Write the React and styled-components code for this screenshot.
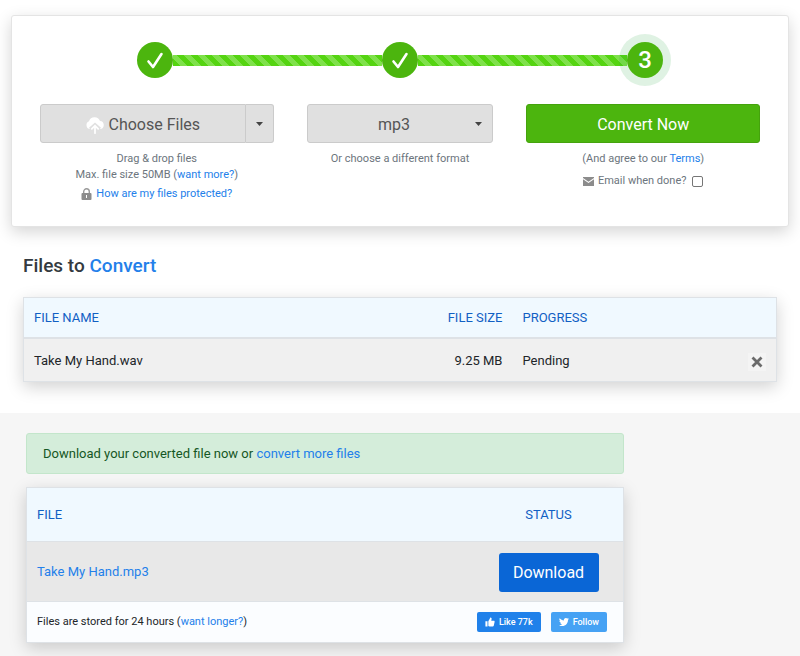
import React, { useState } from 'react';
import styled, { createGlobalStyle } from 'styled-components';

const GlobalStyle = createGlobalStyle`
  * {
    box-sizing: border-box;
  }
  body {
    margin: 0;
    background-color: #f6f6f6;
    color: #212529;
    font-family: Roboto, 'Liberation Sans', sans-serif;
    font-size: 13px;
    line-height: 20px;
  }
  button,
  select,
  input {
    font-family: inherit;
  }
`;

const Link = styled.a`
  color: #2380ea;
  text-decoration: none;
  &:hover {
    text-decoration: underline;
  }
`;

const Top = styled.main`
  background-color: white;
  padding: 15px 11px 31px;
`;

const Card = styled.section`
  border: 1px solid #e4e4e4;
  border-radius: 3px;
  background-color: white;
  box-shadow: 0 5px 16px rgba(0, 0, 0, 0.17);
  padding: 26px 28px 24px;
`;

const Steps = styled.div`
  display: flex;
  align-items: center;
  padding: 0 97px;
`;

const Step = styled.div`
  display: flex;
  align-items: center;
  justify-content: center;
  width: 36px;
  height: 36px;
  border-radius: 50%;
  background-color: #4cb50e;
  color: white;
  font-size: 24px;
  font-weight: 500;
  box-shadow: ${(props) => (props.$active ? '0 0 0 8px rgba(40, 167, 69, 0.15)' : 'none')};
`;

const Connector = styled.div`
  flex: 1;
  height: 11px;
  background: repeating-linear-gradient(45deg, #55d411 0 5px, #7fe14b 5px 10px);
`;

const Columns = styled.div`
  display: grid;
  grid-template-columns: 5fr 4fr 5fr;
  column-gap: 33px;
  margin-top: 26px;
`;

const Column = styled.div`
  display: flex;
  flex-direction: column;
  align-items: center;
  color: #6c757d;
  font-size: 11px;
  line-height: 16px;
`;

const Control = styled.div`
  display: grid;
  grid-template-columns: ${(props) => props.$columns || '1fr'};
  width: 100%;
  height: 39px;
  margin-bottom: 8px;
`;

const BigButton = styled.button`
  display: flex;
  align-items: center;
  justify-content: center;
  gap: 5px;
  padding: 2px 0 0;
  border: 1px solid ${(props) => (props.$green ? '#45a30d' : '#cbcbcb')};
  border-radius: ${(props) => props.$radius || '3px'};
  background-color: ${(props) => (props.$green ? '#4cb50e' : '#e0e0e0')};
  color: ${(props) => (props.$green ? 'white' : '#555')};
  font-size: 16px;
  cursor: pointer;
`;

const CaretButton = styled(BigButton)`
  padding: 0;
  border-left: 0;
`;

const FormatSelect = styled.select`
  grid-area: 1 / 1;
  appearance: none;
  padding: 2px 20px 0 8px;
  border: 1px solid #cbcbcb;
  border-radius: 3px;
  background-color: #e0e0e0;
  color: #555;
  font-size: 16px;
  text-align: center;
  text-align-last: center;
`;

const SelectCaret = styled.span`
  grid-area: 1 / 1;
  display: flex;
  align-items: center;
  justify-self: end;
  padding-right: 11px;
  pointer-events: none;
`;

const Line = styled.div`
  display: flex;
  align-items: center;
  gap: 4px;
  margin-top: ${(props) => props.$top || 0};
`;

const Checkbox = styled.input`
  appearance: none;
  width: 11px;
  height: 11px;
  margin: 0 0 0 2px;
  border: 1px solid #767676;
  border-radius: 2px;
  background-color: white;
  &:checked {
    background-color: #2380ea;
  }
`;

const Title = styled.h1`
  margin: 25px 12px 17px;
  color: #343a40;
  font-size: 19px;
  font-weight: 500;
  line-height: 28px;
`;

const Blue = styled.span`
  color: #2380ea;
`;

const TableShell = styled.div`
  margin: ${(props) => props.$margin || 0};
  border: 1px solid #dee2e6;
  background-color: #fbfdff;
  box-shadow: 0 5px 16px rgba(0, 0, 0, 0.18);
`;

const Table = styled.table`
  width: 100%;
  border-collapse: collapse;
  table-layout: fixed;
`;

const Head = styled.th`
  width: ${(props) => props.$width || 'auto'};
  height: ${(props) => props.$height};
  padding: 1px 10px 0;
  border-bottom: ${(props) => props.$line || '1px'} solid #dee2e6;
  background-color: #f0f9ff;
  color: #1160c4;
  font-weight: 400;
  text-align: ${(props) => props.$align || 'left'};
`;

const Cell = styled.td`
  height: ${(props) => props.$height};
  padding: 2px 10px 0;
  background-color: ${(props) => props.$bg || '#f0f0f0'};
  text-align: ${(props) => props.$align || 'left'};
`;

const RemoveButton = styled.button`
  display: inline-flex;
  padding: 3px;
  border: 0;
  background-color: #f4f4f4;
  vertical-align: middle;
  cursor: pointer;
`;

const Results = styled.section`
  padding: 20px 22% 13px 26px;
`;

const Alert = styled.div`
  padding: 10px 16px;
  border: 1px solid #c3e6cb;
  border-radius: 3px;
  background-color: #d4edda;
  color: #155724;
  line-height: 19px;
`;

const DownloadButton = styled.button`
  width: 100px;
  height: 39px;
  padding: 0;
  border: 0;
  border-radius: 3px;
  background-color: #0a66d6;
  color: white;
  font-size: 16px;
  vertical-align: middle;
  cursor: pointer;
`;

const Footer = styled.footer`
  display: flex;
  align-items: center;
  justify-content: space-between;
  height: 41px;
  padding: 0 16px 0 10px;
  border-top: 1px solid #dee2e6;
  font-size: 11px;
`;

const Social = styled.div`
  display: flex;
  gap: 10px;
`;

const SocialButton = styled.button`
  display: flex;
  align-items: center;
  justify-content: center;
  gap: 4px;
  height: 20px;
  padding: 0 8px;
  border: 0;
  border-radius: 2px;
  background-color: ${(props) => props.$bg};
  color: white;
  font-size: 9px;
  font-weight: 500;
  cursor: pointer;
`;

const Check = () => (
  <svg width="18" height="18" viewBox="0 0 18 18" fill="none" stroke="white" strokeWidth="2.6" strokeLinecap="round" strokeLinejoin="round">
    <path d="M2.500 10.500 7 16 15.500 3" />
  </svg>
);

const Caret = () => (
  <svg width="7" height="4" viewBox="0 0 7 4" fill="#444">
    <path d="M0 0h7L3.5 4z" />
  </svg>
);

const Cloud = () => (
  <svg width="18" height="18" viewBox="0 0 18 18">
    <path fill="white" d="M4.2 13A4 4 0 0 1 3 5.300 5.800 5.800 0 0 1 14 5.100a4 4 0 0 1 .6 7.900z" />
    <path fill="none" stroke="#e0e0e0" strokeWidth="4.500" d="M9 18V10M4.500 13.500 9 9.500l4.500 4" />
    <path fill="none" stroke="white" strokeWidth="1.700" strokeLinecap="round" d="M9 17.200V10M5.800 12.800 9 9.600l3.200 3.200" />
  </svg>
);

const Lock = () => (
  <svg width="11" height="12" viewBox="0 0 11 12">
    <path fill="none" stroke="#999" strokeWidth="1.400" d="M2.700 6V3.600a2.800 2.800 0 0 1 5.600 0V6" />
    <rect x="0.500" y="5" width="10" height="7" rx="1" fill="#8c8c8c" />
    <path fill="none" stroke="white" d="M5.500 7v3" />
  </svg>
);

const Envelope = () => (
  <svg width="11" height="9" viewBox="0 0 11 9" fill="#8c8c8c">
    <path d="M0 0h11v1L5.500 4.800 0 1zM0 2.300l5.500 3.800L11 2.300V9H0z" />
  </svg>
);

const Cross = () => (
  <svg width="12" height="12" viewBox="0 0 12 12" stroke="#6b6b6b" strokeWidth="2.800">
    <path d="M1.500 1.500l9 9M10.500 1.500l-9 9" />
  </svg>
);

const Thumb = () => (
  <svg width="10" height="10" viewBox="0 0 24 24" fill="white">
    <path d="M1 10h5v13H1zM8 10l5-9c2 0 3 1.500 3 3l-1 5h6c1.500 0 2.500 1.200 2 3l-2 9c-.4 1.300-1.200 2-2.500 2H11l-3-1.500z" />
  </svg>
);

const Bird = () => (
  <svg width="10" height="10" viewBox="0 0 24 24" fill="white">
    <path d="M23.950 4.570a10 10 0 0 1-2.820.770 4.960 4.960 0 0 0 2.160-2.720c-.95.550-2 .950-3.130 1.180a4.920 4.920 0 0 0-8.380 4.480C7.690 8.090 4.070 6.130 1.640 3.160a4.920 4.920 0 0 0 1.520 6.570 4.900 4.900 0 0 1-2.230-.610v.060c0 2.390 1.700 4.380 3.950 4.830a5 5 0 0 1-2.210.080 4.940 4.940 0 0 0 4.600 3.420A9.870 9.870 0 0 1 0 19.540a13.990 13.990 0 0 0 7.550 2.210c9.050 0 14-7.500 14-13.980 0-.21 0-.42-.02-.63a9.940 9.940 0 0 0 2.460-2.550z" />
  </svg>
);

const Converter = () => {
  const [format, setFormat] = useState('mp3');
  return (
    <Card>
      <Steps>
        <Step><Check /></Step>
        <Connector />
        <Step><Check /></Step>
        <Connector />
        <Step $active>3</Step>
      </Steps>
      <Columns>
        <Column>
          <Control $columns="1fr 28px">
            <BigButton type="button" $radius="3px 0 0 3px">
              <Cloud />
              Choose Files
            </BigButton>
            <CaretButton type="button" $radius="0 3px 3px 0" aria-label="More sources">
              <Caret />
            </CaretButton>
          </Control>
          <Line>Drag &amp; drop files</Line>
          <div>
            Max. file size 50MB (
            <Link href="#more">want more?</Link>
            )
          </div>
          <Line $top="3px">
            <Lock />
            <Link href="#protected">How are my files protected?</Link>
          </Line>
        </Column>
        <Column>
          <Control>
            <FormatSelect aria-label="Output format" value={format} onChange={(e) => setFormat(e.target.value)}>
              <option value="mp3">mp3</option>
              <option value="flac">flac</option>
              <option value="ogg">ogg</option>
            </FormatSelect>
            <SelectCaret><Caret /></SelectCaret>
          </Control>
          <Line>Or choose a different format</Line>
        </Column>
        <Column>
          <Control>
            <BigButton type="button" $green>Convert Now</BigButton>
          </Control>
          <div>
            (And agree to our
            {' '}
            <Link href="#terms">Terms</Link>
            )
          </div>
          <Line $top="6px">
            <Envelope />
            <label htmlFor="email-done">Email when done?</label>
            <Checkbox id="email-done" type="checkbox" />
          </Line>
        </Column>
      </Columns>
    </Card>
  );
};

const Queue = () => (
  <TableShell $margin="0 12px">
    <Table>
      <thead>
        <tr>
          <Head $height="40px" $line="2px">FILE NAME</Head>
          <Head $height="40px" $line="2px" $width="16%" $align="right">FILE SIZE</Head>
          <Head $height="40px" $line="2px" $width="28%">PROGRESS</Head>
          <Head $height="40px" $line="2px" $width="53px" aria-label="Remove" />
        </tr>
      </thead>
      <tbody>
        <tr>
          <Cell $height="43px">Take My Hand.wav</Cell>
          <Cell $align="right">9.25 MB</Cell>
          <Cell>Pending</Cell>
          <Cell $align="right">
            <RemoveButton type="button" aria-label="Remove file"><Cross /></RemoveButton>
          </Cell>
        </tr>
      </tbody>
    </Table>
  </TableShell>
);

const Downloads = () => (
  <Results>
    <Alert>
      Download your converted file now or
      {' '}
      <Link href="#convert">convert more files</Link>
    </Alert>
    <TableShell $margin="13px 0 0">
      <Table>
        <thead>
          <tr>
            <Head $height="53px">FILE</Head>
            <Head $height="53px" $width="25%" $align="center">STATUS</Head>
          </tr>
        </thead>
        <tbody>
          <tr>
            <Cell $height="60px" $bg="#e8e8e8">
              <Link href="#file">Take My Hand.mp3</Link>
            </Cell>
            <Cell $bg="#e8e8e8" $align="center">
              <DownloadButton type="button">Download</DownloadButton>
            </Cell>
          </tr>
        </tbody>
      </Table>
      <Footer>
        <div>
          Files are stored for 24 hours (
          <Link href="#longer">want longer?</Link>
          )
        </div>
        <Social>
          <SocialButton type="button" $bg="#2081ea">
            <Thumb />
            Like 77k
          </SocialButton>
          <SocialButton type="button" $bg="#46a2f4">
            <Bird />
            Follow
          </SocialButton>
        </Social>
      </Footer>
    </TableShell>
  </Results>
);

const App = () => (
  <>
    <GlobalStyle />
    <Top>
      <Converter />
      <Title>
        Files to
        {' '}
        <Blue>Convert</Blue>
      </Title>
      <Queue />
    </Top>
    <Downloads />
  </>
);

export default App;
